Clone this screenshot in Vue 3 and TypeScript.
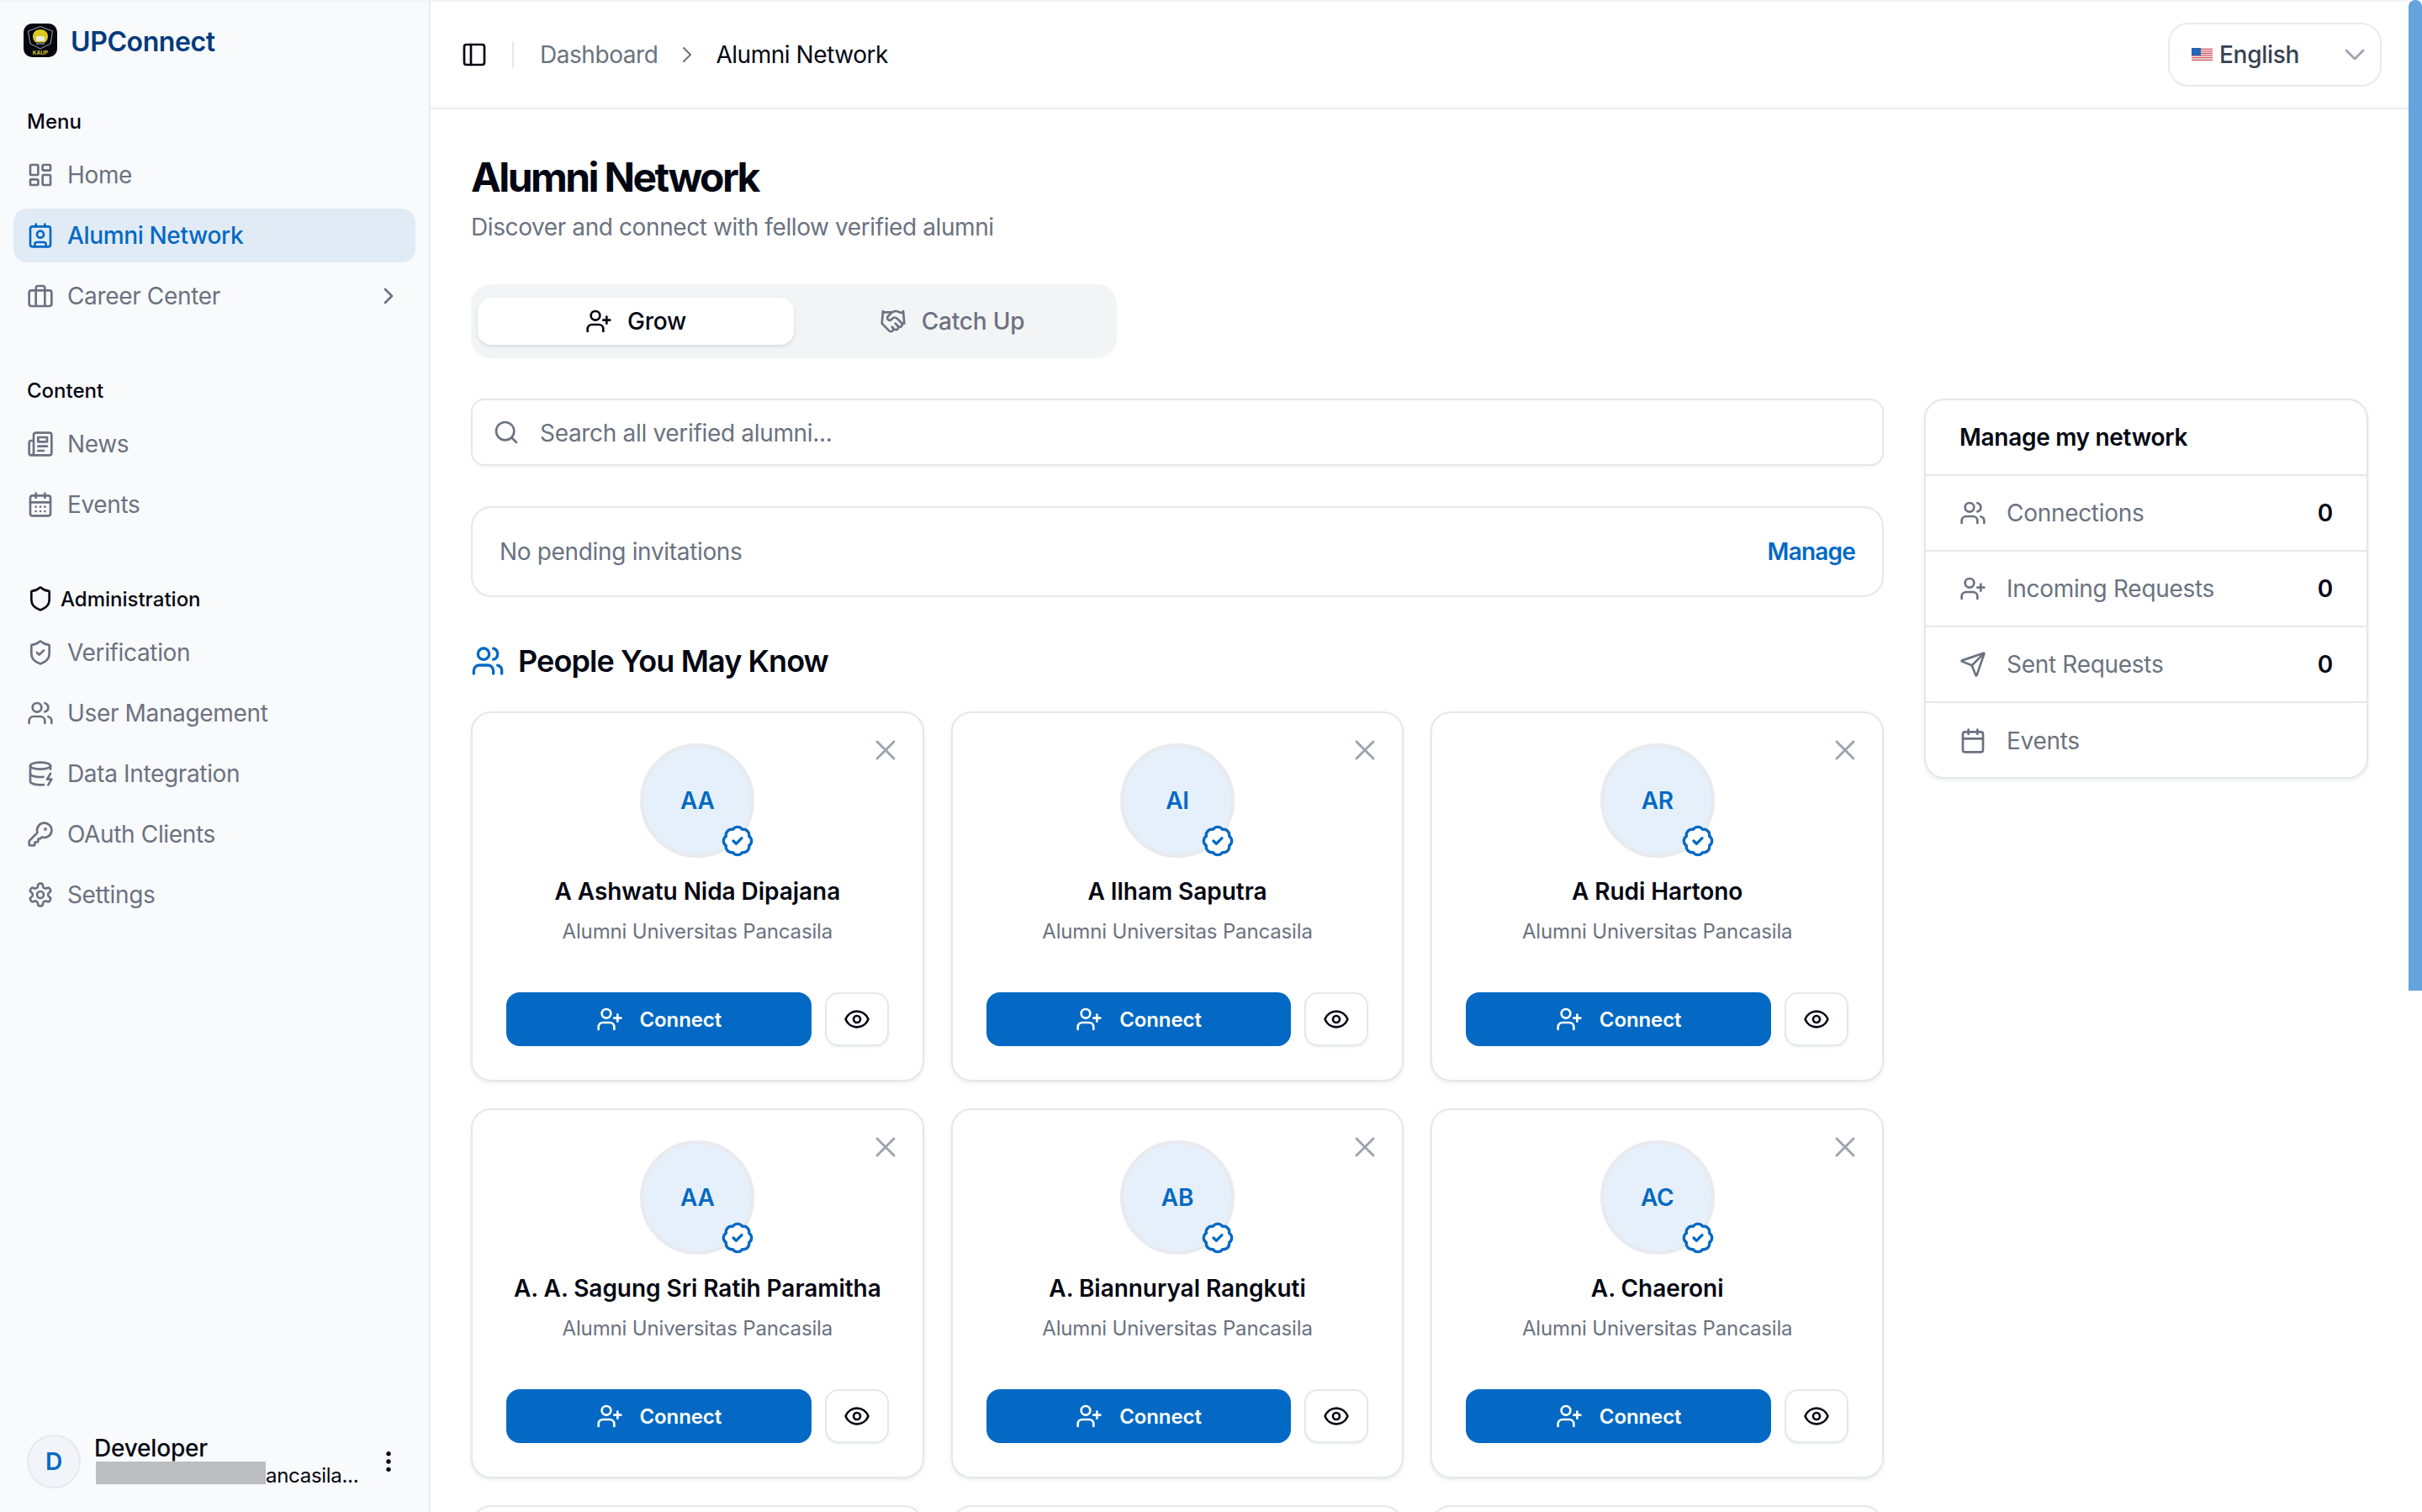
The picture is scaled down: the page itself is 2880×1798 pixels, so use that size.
<script setup lang="ts">
interface NavItem {
  label: string;
  icon: string;
  active?: boolean;
  chevron?: boolean;
}

const shieldPath =
  'M20 13c0 5-3.5 7.5-7.66 8.95a1 1 0 0 1-.67-.01C7.5 20.5 4 18 4 13V6a1 1 0 0 1 1-1c2 0 4.5-1.2 6.24-2.72a1.17 1.17 0 0 1 1.52 0C14.51 3.81 17 5 19 5a1 1 0 0 1 1 1z';

const icons: Record<string, string> = {
  dashboard:
    '<rect width="7" height="9" x="3" y="3" rx="1"/><rect width="7" height="5" x="14" y="3" rx="1"/><rect width="7" height="9" x="14" y="12" rx="1"/><rect width="7" height="5" x="3" y="16" rx="1"/>',
  contact:
    '<path d="M16 2v2"/><path d="M7 22v-2a2 2 0 0 1 2-2h6a2 2 0 0 1 2 2v2"/><path d="M8 2v2"/><circle cx="12" cy="11" r="3"/><rect x="3" y="4" width="18" height="18" rx="2"/>',
  briefcase:
    '<rect width="20" height="14" x="2" y="7" rx="2"/><path d="M16 21V5a2 2 0 0 0-2-2h-4a2 2 0 0 0-2 2v16"/>',
  chevronRight: '<path d="m9 18 6-6-6-6"/>',
  chevronDown: '<path d="m6 9 6 6 6-6"/>',
  newspaper:
    '<path d="M4 22h16a2 2 0 0 0 2-2V4a2 2 0 0 0-2-2H8a2 2 0 0 0-2 2v16a2 2 0 0 1-2 2Zm0 0a2 2 0 0 1-2-2v-9c0-1.1.9-2 2-2h2"/><path d="M18 14h-8"/><path d="M15 18h-5"/><path d="M10 6h8v4h-8V6Z"/>',
  calendarDays:
    '<path d="M8 2v4"/><path d="M16 2v4"/><rect width="18" height="18" x="3" y="4" rx="2"/><path d="M3 10h18"/><path d="M8 14h.01"/><path d="M12 14h.01"/><path d="M16 14h.01"/><path d="M8 18h.01"/><path d="M12 18h.01"/><path d="M16 18h.01"/>',
  calendar:
    '<path d="M8 2v4"/><path d="M16 2v4"/><rect width="18" height="18" x="3" y="4" rx="2"/><path d="M3 10h18"/>',
  shield: `<path d="${shieldPath}"/>`,
  shieldCheck: `<path d="${shieldPath}"/><path d="m9 12 2 2 4-4"/>`,
  users:
    '<path d="M16 21v-2a4 4 0 0 0-4-4H6a4 4 0 0 0-4 4v2"/><path d="M16 3.128a4 4 0 0 1 0 7.744"/><path d="M22 21v-2a4 4 0 0 0-3-3.87"/><circle cx="9" cy="7" r="4"/>',
  userPlus:
    '<path d="M16 21v-2a4 4 0 0 0-4-4H6a4 4 0 0 0-4 4v2"/><circle cx="9" cy="7" r="4"/><path d="M19 8v6"/><path d="M22 11h-6"/>',
  database:
    '<ellipse cx="12" cy="5" rx="9" ry="3"/><path d="M3 5V19A9 3 0 0 0 15 21.84"/><path d="M21 5V8"/><path d="M21 12L18 17H22L19 22"/><path d="M3 12A9 3 0 0 0 14.59 14.87"/>',
  key: '<path d="M2.586 17.414A2 2 0 0 0 2 18.828V21a1 1 0 0 0 1 1h3a1 1 0 0 0 1-1v-1a1 1 0 0 1 1-1h1a1 1 0 0 0 1-1v-1a1 1 0 0 1 1-1h.172a2 2 0 0 0 1.414-.586l.814-.814a6.5 6.5 0 1 0-4-4z"/><circle cx="16.5" cy="7.5" r=".5" fill="currentColor"/>',
  settings:
    '<path d="M12.22 2h-.44a2 2 0 0 0-2 2v.18a2 2 0 0 1-1 1.73l-.43.25a2 2 0 0 1-2 0l-.15-.08a2 2 0 0 0-2.73.73l-.22.38a2 2 0 0 0 .73 2.73l.15.1a2 2 0 0 1 1 1.72v.51a2 2 0 0 1-1 1.74l-.15.09a2 2 0 0 0-.73 2.73l.22.38a2 2 0 0 0 2.73.73l.15-.08a2 2 0 0 1 2 0l.43.25a2 2 0 0 1 1 1.73V20a2 2 0 0 0 2 2h.44a2 2 0 0 0 2-2v-.18a2 2 0 0 1 1-1.73l.43-.25a2 2 0 0 1 2 0l.15.08a2 2 0 0 0 2.73-.73l.22-.39a2 2 0 0 0-.73-2.73l-.15-.08a2 2 0 0 1-1-1.74v-.5a2 2 0 0 1 1-1.74l.15-.09a2 2 0 0 0 .73-2.73l-.22-.38a2 2 0 0 0-2.73-.73l-.15.08a2 2 0 0 1-2 0l-.43-.25a2 2 0 0 1-1-1.73V4a2 2 0 0 0-2-2z"/><circle cx="12" cy="12" r="3"/>',
  panel: '<rect width="18" height="18" x="3" y="3" rx="2"/><path d="M9 3v18"/>',
  handshake:
    '<path d="m11 17 2 2a1 1 0 1 0 3-3"/><path d="m14 14 2.5 2.5a1 1 0 1 0 3-3l-3.88-3.88a3 3 0 0 0-4.24 0l-.88.88a1 1 0 1 1-3-3l2.81-2.81a5.79 5.79 0 0 1 7.06-.87l.47.28a2 2 0 0 0 1.42.25L21 4"/><path d="m21 3 1 11h-2"/><path d="M3 3 2 14l6.5 6.5a1 1 0 1 0 3-3"/><path d="M3 4h8"/>',
  search: '<path d="m21 21-4.34-4.34"/><circle cx="11" cy="11" r="8"/>',
  x: '<path d="M18 6 6 18"/><path d="m6 6 12 12"/>',
  badgeCheck:
    '<path d="M3.85 8.62a4 4 0 0 1 4.78-4.77 4 4 0 0 1 6.74 0 4 4 0 0 1 4.78 4.78 4 4 0 0 1 0 6.74 4 4 0 0 1-4.77 4.78 4 4 0 0 1-6.75 0 4 4 0 0 1-4.78-4.77 4 4 0 0 1 0-6.76Z"/><path d="m9 12 2 2 4-4"/>',
  eye: '<path d="M2.062 12.348a1 1 0 0 1 0-.696 10.75 10.75 0 0 1 19.876 0 1 1 0 0 1 0 .696 10.75 10.75 0 0 1-19.876 0"/><circle cx="12" cy="12" r="3"/>',
  send: '<path d="M14.536 21.686a.5.5 0 0 0 .937-.024l6.5-19a.496.496 0 0 0-.635-.635l-19 6.5a.5.5 0 0 0-.024.937l7.93 3.18a2 2 0 0 1 1.112 1.11z"/><path d="m21.854 2.147-10.94 10.939"/>',
  dots: '<circle cx="12" cy="12" r="1"/><circle cx="12" cy="5" r="1"/><circle cx="12" cy="19" r="1"/>',
};

const menuItems: NavItem[] = [
  { label: 'Home', icon: 'dashboard' },
  { label: 'Alumni Network', icon: 'contact', active: true },
  { label: 'Career Center', icon: 'briefcase', chevron: true },
];
const contentItems: NavItem[] = [
  { label: 'News', icon: 'newspaper' },
  { label: 'Events', icon: 'calendarDays' },
];
const adminItems: NavItem[] = [
  { label: 'Verification', icon: 'shieldCheck' },
  { label: 'User Management', icon: 'users' },
  { label: 'Data Integration', icon: 'database' },
  { label: 'OAuth Clients', icon: 'key' },
  { label: 'Settings', icon: 'settings' },
];

const navGroups = [
  { title: 'Menu', icon: '', items: menuItems },
  { title: 'Content', icon: '', items: contentItems },
  { title: 'Administration', icon: 'shield', items: adminItems },
];

const people = [
  { name: 'A Ashwatu Nida Dipajana', initials: 'AA' },
  { name: 'A Ilham Saputra', initials: 'AI' },
  { name: 'A Rudi Hartono', initials: 'AR' },
  { name: 'A. A. Sagung Sri Ratih Paramitha', initials: 'AA' },
  { name: 'A. Biannuryal Rangkuti', initials: 'AB' },
  { name: 'A. Chaeroni', initials: 'AC' },
];

const networkRows = [
  { label: 'Connections', icon: 'users', count: '0' },
  { label: 'Incoming Requests', icon: 'userPlus', count: '0' },
  { label: 'Sent Requests', icon: 'send', count: '0' },
  { label: 'Events', icon: 'calendar', count: '' },
];
</script>

<template>
  <div class="app">
    <div class="shell">
      <aside class="sidebar">
        <div class="brand">
          <svg class="brand__logo" viewBox="0 0 40 40">
            <rect width="40" height="40" rx="10" fill="#05070f" />
            <path d="M20 3.5 34.5 9 32 24 20 30 8 24 5.5 9Z" fill="none" stroke="#c9ccd2" stroke-width="0.8" />
            <path d="M20 7c5.5 0 9 3.5 9 8.5 0 3-1.5 5.5-3.500 7h-11C12.5 21 11 18.5 11 15.5 11 10.5 14.5 7 20 7Z" fill="#d9c91f" />
            <rect x="15" y="15" width="10" height="6" rx="1.5" fill="#e9ebe6" />
            <path d="M15 24h10" stroke="#c9ccd2" stroke-width="1" />
            <text x="20" y="37" text-anchor="middle" class="brand__mark">KAUP</text>
          </svg>
          <span class="brand__name">UPConnect</span>
        </div>

        <nav class="nav">
          <section v-for="group in navGroups" :key="group.title" class="nav__group">
            <h3 class="nav__title" :class="{ 'nav__title--icon': group.icon }">
              <svg v-if="group.icon" class="icon" viewBox="0 0 24 24" v-html="icons[group.icon]" />
              {{ group.title }}
            </h3>
            <a
              v-for="item in group.items"
              :key="item.label"
              class="nav__item"
              :class="{ 'nav__item--active': item.active }"
            >
              <svg class="icon" viewBox="0 0 24 24" v-html="icons[item.icon]" />
              <span>{{ item.label }}</span>
              <svg
                v-if="item.chevron"
                class="icon nav__chevron"
                viewBox="0 0 24 24"
                v-html="icons.chevronRight"
              />
            </a>
          </section>
        </nav>

        <div class="account">
          <div class="account__avatar">D</div>
          <div class="account__text">
            <div class="account__name">Developer</div>
            <div class="account__mail"><i class="account__redact"></i>ancasila...</div>
          </div>
          <svg class="icon account__more" viewBox="0 0 24 24" v-html="icons.dots" />
        </div>
      </aside>

      <div class="page">
        <header class="topbar">
          <svg class="icon topbar__toggle" viewBox="0 0 24 24" v-html="icons.panel" />
          <span class="topbar__sep"></span>
          <span class="crumb">Dashboard</span>
          <svg class="icon crumb__chevron" viewBox="0 0 24 24" v-html="icons.chevronRight" />
          <span class="crumb crumb--current">Alumni Network</span>
          <div class="lang">
            <svg class="lang__flag" viewBox="0 0 25 17">
              <rect width="25" height="17" rx="1.5" fill="#eef0f2" />
              <path
                d="M0 1.3h25M0 3.9h25M0 6.5h25M0 9.1h25M0 11.7h25M0 14.3h25"
                stroke="#d9535c"
                stroke-width="1.3"
              />
              <rect width="11" height="9" fill="#2266b8" />
            </svg>
            <span class="lang__label">English</span>
            <svg class="icon lang__chevron" viewBox="0 0 24 24" v-html="icons.chevronDown" />
          </div>
        </header>

        <main class="content">
          <h1 class="content__title">Alumni Network</h1>
          <p class="content__sub">Discover and connect with fellow verified alumni</p>

          <div class="tabs">
            <button class="tab tab--active">
              <svg class="icon" viewBox="0 0 24 24" v-html="icons.userPlus" />
              Grow
            </button>
            <button class="tab">
              <svg class="icon" viewBox="0 0 24 24" v-html="icons.handshake" />
              Catch Up
            </button>
          </div>

          <div class="columns">
            <div class="columns__main">
              <div class="search">
                <svg class="icon search__icon" viewBox="0 0 24 24" v-html="icons.search" />
                <span class="search__text">Search all verified alumni...</span>
              </div>

              <div class="invites">
                <span>No pending invitations</span>
                <a class="invites__manage">Manage</a>
              </div>

              <h2 class="section-title">
                <svg class="icon section-title__icon" viewBox="0 0 24 24" v-html="icons.users" />
                People You May Know
              </h2>

              <div class="people">
                <article v-for="person in people" :key="person.name" class="person">
                  <svg class="icon person__dismiss" viewBox="0 0 24 24" v-html="icons.x" />
                  <div class="person__avatar">
                    {{ person.initials }}
                    <svg class="icon person__badge" viewBox="0 0 24 24" v-html="icons.badgeCheck" />
                  </div>
                  <div class="person__name">{{ person.name }}</div>
                  <div class="person__org">Alumni Universitas Pancasila</div>
                  <div class="person__actions">
                    <button class="btn-connect">
                      <svg class="icon" viewBox="0 0 24 24" v-html="icons.userPlus" />
                      Connect
                    </button>
                    <button class="btn-view">
                      <svg class="icon" viewBox="0 0 24 24" v-html="icons.eye" />
                    </button>
                  </div>
                </article>
                <article v-for="n in 3" :key="n" class="person person--empty"></article>
              </div>
            </div>

            <aside class="panel">
              <div class="panel__title">Manage my network</div>
              <div v-for="row in networkRows" :key="row.label" class="panel__row">
                <svg class="icon" viewBox="0 0 24 24" v-html="icons[row.icon]" />
                <span class="panel__label">{{ row.label }}</span>
                <span class="panel__count">{{ row.count }}</span>
              </div>
            </aside>
          </div>
        </main>
      </div>
    </div>
    <div class="scrollbar"><div class="scrollbar__thumb"></div></div>
  </div>
</template>

<style>
html,
body {
  margin: 0;
  height: 100%;
  overflow: hidden;
  background: #fff;
}
</style>

<style scoped>
.app {
  display: flex;
  height: 1798px;
  overflow: hidden;
  font-family: Inter, 'Liberation Sans', sans-serif;
  color: #030712;
  background: #fff;
}
.shell {
  flex: 1;
  min-width: 0;
  display: flex;
  border-top: 2px solid #f3f4f6;
}
.icon {
  width: 32px;
  height: 32px;
  flex: none;
  fill: none;
  stroke: currentColor;
  stroke-width: 2;
  stroke-linecap: round;
  stroke-linejoin: round;
}

/* sidebar */
.sidebar {
  width: 512px;
  flex: none;
  box-sizing: border-box;
  display: flex;
  flex-direction: column;
  padding: 0 16px;
  background: #f9fafc;
  border-right: 2px solid #e9eaef;
}
.brand {
  height: 126px;
  flex: none;
  display: flex;
  align-items: flex-start;
  gap: 16px;
  padding: 26px 0 0 12px;
  box-sizing: border-box;
}
.brand__logo {
  width: 40px;
  height: 40px;
  flex: none;
}
.brand__mark {
  font-size: 6.5px;
  font-weight: 700;
  fill: #d9c91f;
}
.brand__name {
  margin-top: 2px;
  font-size: 32px;
  line-height: 40px;
  font-weight: 600;
  letter-spacing: -0.4px;
  color: #043b7c;
}
.nav__group + .nav__group {
  margin-top: 64px;
}
.nav__title {
  height: 32px;
  margin: 0 0 16px;
  padding-left: 16px;
  display: flex;
  align-items: center;
  font-size: 24px;
  font-weight: 500;
}
.nav__title--icon {
  padding-left: 16px;
  gap: 8px;
}
.nav__item {
  height: 64px;
  margin-bottom: 8px;
  padding: 0 16px;
  display: flex;
  align-items: center;
  gap: 16px;
  border-radius: 16px;
  font-size: 28px;
  letter-spacing: -0.35px;
  color: #6b7280;
}
.nav__item--active {
  background: #e1ebf6;
  color: #0369c4;
  font-weight: 500;
}
.nav__chevron {
  margin-left: auto;
}
.account {
  margin-top: auto;
  margin-bottom: 28px;
  padding-left: 16px;
  display: flex;
  align-items: center;
  gap: 16px;
}
.account__avatar {
  width: 64px;
  height: 64px;
  flex: none;
  box-sizing: border-box;
  display: flex;
  align-items: center;
  justify-content: center;
  border: 2px solid #e7e9ee;
  border-radius: 50%;
  background: #f1f5fa;
  color: #0369c4;
  font-size: 28px;
  font-weight: 600;
}
.account__text {
  flex: 1;
  min-width: 0;
}
.account__name {
  font-size: 28px;
  line-height: 32px;
  font-weight: 500;
  letter-spacing: -0.2px;
}
.account__mail {
  display: flex;
  align-items: center;
  height: 32px;
  font-size: 24px;
  letter-spacing: -0.3px;
}
.account__redact {
  width: 202px;
  height: 27px;
  margin: -6px 0 0 2px;
  background: #bcbdc0;
}
.account__more {
  margin-right: 16px;
}

/* top bar */
.page {
  flex: 1;
  min-width: 0;
  display: flex;
  flex-direction: column;
}
.topbar {
  height: 128px;
  flex: none;
  box-sizing: border-box;
  display: flex;
  align-items: center;
  padding: 0 32px 0 36px;
  border-bottom: 2px solid #e9eaef;
}
.topbar__sep {
  width: 2px;
  height: 32px;
  margin: 0 31px 0 29px;
  background: #e5e7eb;
}
.crumb {
  font-size: 28px;
  letter-spacing: -0.45px;
  color: #6b7280;
}
.crumb--current {
  color: #030712;
}
.crumb__chevron {
  margin: 0 18px 0 19px;
  color: #6b7280;
  stroke-width: 1.5;
}
.lang {
  margin-left: auto;
  width: 254px;
  height: 76px;
  box-sizing: border-box;
  display: flex;
  align-items: center;
  padding: 0 10px 0 26px;
  border: 2px solid #e9eaef;
  border-radius: 24px;
}
.lang__flag {
  width: 25px;
  height: 17px;
  flex: none;
}
.lang__label {
  margin-left: 8px;
  font-size: 28px;
  font-weight: 500;
  letter-spacing: -0.3px;
  color: #374151;
}
.lang__chevron {
  width: 40px;
  height: 40px;
  margin-left: auto;
  color: #9ca3af;
  stroke-width: 1.6;
}

/* content */
.content {
  flex: 1;
  min-height: 0;
  padding: 48px 48px 0;
}
.content__title {
  margin: 0;
  font-size: 48px;
  line-height: 66px;
  font-weight: 700;
  letter-spacing: -2.6px;
}
.content__sub {
  margin: 6px 0 0;
  font-size: 28px;
  line-height: 40px;
  letter-spacing: -0.4px;
  color: #6b7280;
}
.tabs {
  width: 768px;
  height: 88px;
  margin-top: 48px;
  box-sizing: border-box;
  display: grid;
  grid-template-columns: 1fr 1fr;
  padding: 16px 8px;
  background: #f3f4f6;
  border-radius: 24px;
}
.tab {
  display: flex;
  align-items: center;
  justify-content: center;
  gap: 18px;
  border: 0;
  background: transparent;
  border-radius: 16px;
  font: 500 28px Inter, sans-serif;
  letter-spacing: -0.2px;
  color: #6b7280;
}
.tab--active {
  background: #fff;
  color: #030712;
  box-shadow: 0 2px 4px rgba(15, 23, 42, 0.12);
}
.columns {
  display: flex;
  gap: 48px;
  margin-top: 48px;
}
.columns__main {
  width: 1680px;
  flex: none;
}
.search {
  height: 80px;
  box-sizing: border-box;
  display: flex;
  align-items: center;
  gap: 24px;
  padding: 0 24px;
  border: 2px solid #e5e7eb;
  border-radius: 16px;
  font-size: 28px;
  letter-spacing: -0.32px;
  color: #6b7280;
  box-shadow: 0 2px 3px rgba(15, 23, 42, 0.04);
}
.search__text {
  padding-top: 2px;
}
.invites {
  height: 108px;
  margin-top: 48px;
  box-sizing: border-box;
  display: flex;
  align-items: center;
  justify-content: space-between;
  padding: 0 32px;
  border: 2px solid #e5e7eb;
  border-radius: 24px;
  font-size: 28px;
  letter-spacing: -0.33px;
  color: #6b7280;
}
.invites__manage {
  font-weight: 600;
  letter-spacing: -0.8px;
  color: #0369c4;
}
.section-title {
  height: 56px;
  margin: 48px 0 32px;
  display: flex;
  align-items: center;
  gap: 16px;
  font-size: 36px;
  font-weight: 600;
  letter-spacing: -0.9px;
}
.section-title__icon {
  width: 40px;
  height: 40px;
  color: #0369c4;
}
.people {
  display: grid;
  grid-template-columns: repeat(3, 1fr);
  gap: 32px;
}
.person {
  position: relative;
  height: 440px;
  box-sizing: border-box;
  display: flex;
  flex-direction: column;
  align-items: center;
  padding: 36px 40px 0;
  border: 2px solid #e5e7eb;
  border-radius: 24px;
  background: #fff;
  box-shadow: 0 2px 4px rgba(15, 23, 42, 0.08);
}
.person__dismiss {
  position: absolute;
  top: 24px;
  right: 24px;
  width: 40px;
  height: 40px;
  color: #9ca3af;
  stroke-width: 1.7;
}
.person__avatar {
  position: relative;
  width: 136px;
  height: 136px;
  flex: none;
  box-sizing: border-box;
  display: flex;
  align-items: center;
  justify-content: center;
  border: 4px solid #e8eaee;
  border-radius: 50%;
  background: #e6f0fa;
  color: #0369c4;
  font-size: 28px;
  font-weight: 600;
  letter-spacing: -0.3px;
}
.person__badge {
  position: absolute;
  right: -4px;
  bottom: -4px;
  width: 40px;
  height: 40px;
  color: #0369c4;
  fill: #fff;
  stroke-width: 2;
}
.person__name {
  margin-top: 20px;
  font-size: 28px;
  line-height: 40px;
  font-weight: 600;
  letter-spacing: -0.05px;
  text-align: center;
}
.person__org {
  margin-top: 12px;
  font-size: 24px;
  line-height: 32px;
  letter-spacing: -0.15px;
  color: #6b7280;
}
.person__actions {
  width: 100%;
  margin-top: auto;
  margin-bottom: 40px;
  display: flex;
  gap: 16px;
}
.btn-connect {
  flex: 1;
  height: 64px;
  display: flex;
  align-items: center;
  justify-content: center;
  gap: 20px;
  border: 0;
  border-radius: 16px;
  background: #0369c4;
  color: #fff;
  font: 600 24px Inter, sans-serif;
  letter-spacing: -0.1px;
}
.btn-view {
  width: 76px;
  height: 64px;
  flex: none;
  box-sizing: border-box;
  display: flex;
  align-items: center;
  justify-content: center;
  padding: 0;
  border: 2px solid #e5e7eb;
  border-radius: 16px;
  background: #fff;
  color: #030712;
  box-shadow: 0 2px 3px rgba(15, 23, 42, 0.05);
}

/* network panel */
.panel {
  width: 528px;
  height: 452px;
  flex: none;
  box-sizing: border-box;
  border: 2px solid #e5e7eb;
  border-radius: 24px;
  background: #fff;
  box-shadow: 0 2px 4px rgba(15, 23, 42, 0.08);
}
.panel__title {
  height: 90px;
  box-sizing: border-box;
  display: flex;
  align-items: center;
  padding: 0 40px;
  font-size: 28px;
  font-weight: 600;
  letter-spacing: -0.3px;
  border-bottom: 2px solid #e5e7eb;
}
.panel__row {
  height: 90px;
  box-sizing: border-box;
  display: flex;
  align-items: center;
  gap: 24px;
  padding: 0 40px;
  font-size: 28px;
  letter-spacing: -0.3px;
  color: #6b7280;
  border-bottom: 2px solid #e5e7eb;
}
.panel__row:last-child {
  border-bottom: 0;
}
.panel__count {
  margin-left: auto;
  font-weight: 600;
  color: #030712;
}

.scrollbar {
  width: 16px;
  flex: none;
}
.scrollbar__thumb {
  height: 1178px;
  background: #64a3db;
  border-radius: 8px 8px 0 0;
}
</style>
